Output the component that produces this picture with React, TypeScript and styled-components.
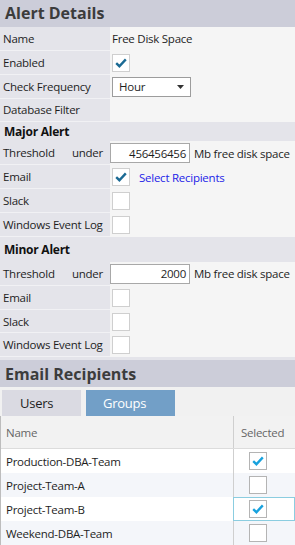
import React, { FunctionComponent } from 'react';
import styled, { createGlobalStyle } from 'styled-components';

const GlobalStyle = createGlobalStyle`
    html, body {
        margin: 0;
        padding: 0;
        background: #e4e4ea;
        font-family: "Open Sans", "Noto Sans", sans-serif;
        font-size: 11.5px;
        letter-spacing: -0.25px;
        color: #1e1e1e;
    }
`;

const Page = styled.div`
    width: 295px;
    height: 545px;
    overflow: hidden;
    display: flex;
    flex-direction: column;
    background: #e4e4ea;
`;

const PanelHeader = styled.div<{ $gap?: number }>`
    height: 27px;
    margin-top: ${({ $gap }) => $gap || 0}px;
    display: flex;
    align-items: center;
    padding-left: 5px;
    background: #cccdd9;
    color: #3c3c3c;
    font-size: 16px;
    font-weight: 700;
    letter-spacing: 0;
`;

const SectionTitle = styled.div<{ $height: number }>`
    height: ${({ $height }) => $height}px;
    display: flex;
    align-items: center;
    padding-left: 4px;
    font-weight: 700;
    font-size: 12px;
    color: #111;
`;

const Row = styled.div`
    display: grid;
    grid-template-columns: 110px 1fr;
    height: 24px;
`;

const Label = styled.div`
    display: flex;
    align-items: center;
    justify-content: space-between;
    padding: 0 7px 0 3px;
    border-bottom: 1px solid #f1f1f4;
    white-space: nowrap;
`;

const Value = styled.div`
    display: flex;
    align-items: center;
    gap: 4px;
    padding-left: 2px;
    background: #f5f5f5;
    white-space: nowrap;
`;

const Box = styled.span<{ $table?: boolean }>`
    width: 16px;
    height: 16px;
    display: inline-flex;
    align-items: center;
    justify-content: center;
    background: #fff;
    border: 1px solid ${({ $table }) => ($table ? '#b4b4b4' : '#cfcfcf')};
`;

const Select = styled.div`
    width: 79px;
    height: 20px;
    display: flex;
    align-items: center;
    justify-content: space-between;
    padding: 0 6px;
    box-sizing: border-box;
    background: #fff;
    border: 1px solid #9c9c9c;
`;

const NumberInput = styled.div`
    width: 80px;
    height: 20px;
    box-sizing: border-box;
    display: flex;
    align-items: center;
    justify-content: flex-end;
    padding-right: 3px;
    margin-left: -2px;
    background: #fff;
    border: 1px solid #a8a8a8;
`;

const Link = styled.span`
    color: #2323e8;
    margin-left: 5px;
`;

const TabStrip = styled.div`
    height: 29px;
    display: flex;
    align-items: flex-end;
    gap: 5px;
    padding-left: 2px;
    background: #f1f1f1;
`;

const Tab = styled.div<{ $active?: boolean }>`
    width: ${({ $active }) => ($active ? 89 : 79)}px;
    height: 26px;
    display: flex;
    align-items: center;
    box-sizing: border-box;
    padding-left: ${({ $active }) => ($active ? 17 : 18)}px;
    font-size: 13px;
    background: ${({ $active }) => ($active ? '#729fc7' : '#dadae2')};
    color: ${({ $active }) => ($active ? '#fff' : '#1e1e1e')};
`;

const Table = styled.div`
    flex: 1;
    background: #fff;
    border-left: 1px solid #bdbdbd;
`;

const TableRow = styled.div<{ $alt?: boolean; $head?: boolean }>`
    display: grid;
    grid-template-columns: 232px 1fr;
    height: ${({ $head }) => ($head ? 33 : 24)}px;
    background: ${({ $head, $alt }) => ($head ? '#f2f2f2' : $alt ? '#f4f6fa' : '#fff')};
    color: ${({ $head }) => ($head ? '#666' : '#1e1e1e')};
    border-bottom: ${({ $head }) => ($head ? '1px solid #dcdcdc' : 'none')};
    box-sizing: border-box;
`;

const Cell = styled.div<{ $narrow?: boolean; $focus?: boolean }>`
    display: flex;
    align-items: center;
    padding-left: ${({ $narrow }) => ($narrow ? 15 : 5)}px;
    box-sizing: border-box;
    border-left: ${({ $narrow }) => ($narrow ? '1px solid #cfcfcf' : 'none')};
    outline: ${({ $focus }) => ($focus ? '1px solid #8bcde0' : 'none')};
    outline-offset: -1px;
`;

const HeadCell = styled(Cell)`
    padding-left: ${({ $narrow }) => ($narrow ? 7 : 5)}px;
`;

const Check: FunctionComponent<{ color: string }> = ({ color }) => (
    <svg width="12" height="10" viewBox="0 0 12 10">
        <path d="M1.2 5.2 L4.4 8.2 L10.8 1.4" fill="none" stroke={color} strokeWidth="2.4" />
    </svg>
);

const CheckBox: FunctionComponent<{ checked?: boolean; table?: boolean }> = ({ checked, table }) => (
    <Box $table={table}>{checked && <Check color={table ? '#18a2de' : '#1b6a94'} />}</Box>
);

const FormRow: FunctionComponent<{ label: string; extra?: string; children?: React.ReactNode }> = ({ label, extra, children }) => (
    <Row>
        <Label>
            <span>{label}</span>
            {extra && <span>{extra}</span>}
        </Label>
        <Value>{children}</Value>
    </Row>
);

const groups = [
    { name: 'Production-DBA-Team', selected: true },
    { name: 'Project-Team-A', selected: false },
    { name: 'Project-Team-B', selected: true, focus: true },
    { name: 'Weekend-DBA-Team', selected: false },
];

const App: FunctionComponent = () => {
    return (
        <Page>
            <GlobalStyle />
            <PanelHeader>Alert Details</PanelHeader>
            <FormRow label="Name">Free Disk Space</FormRow>
            <FormRow label="Enabled"><CheckBox checked /></FormRow>
            <FormRow label="Check Frequency">
                <Select>
                    <span>Hour</span>
                    <svg width="7" height="4" viewBox="0 0 7 4"><path d="M0 0 H7 L3.5 4 Z" fill="#333" /></svg>
                </Select>
            </FormRow>
            <FormRow label="Database Filter" />

            <SectionTitle $height={19}>Major Alert</SectionTitle>
            <FormRow label="Threshold" extra="under">
                <NumberInput>456456456</NumberInput>
                <span>Mb free disk space</span>
            </FormRow>
            <FormRow label="Email"><CheckBox checked /><Link>Select Recipients</Link></FormRow>
            <FormRow label="Slack"><CheckBox /></FormRow>
            <FormRow label="Windows Event Log"><CheckBox /></FormRow>

            <SectionTitle $height={25}>Minor Alert</SectionTitle>
            <FormRow label="Threshold" extra="under">
                <NumberInput>2000</NumberInput>
                <span>Mb free disk space</span>
            </FormRow>
            <FormRow label="Email"><CheckBox /></FormRow>
            <FormRow label="Slack"><CheckBox /></FormRow>
            <FormRow label="Windows Event Log"><CheckBox /></FormRow>

            <PanelHeader $gap={3}>Email Recipients</PanelHeader>
            <TabStrip>
                <Tab>Users</Tab>
                <Tab $active>Groups</Tab>
            </TabStrip>
            <Table>
                <TableRow $head>
                    <HeadCell>Name</HeadCell>
                    <HeadCell $narrow>Selected</HeadCell>
                </TableRow>
                {groups.map((g, i) => (
                    <TableRow key={g.name} $alt={i % 2 === 1}>
                        <Cell>{g.name}</Cell>
                        <Cell $narrow $focus={g.focus}><CheckBox table checked={g.selected} /></Cell>
                    </TableRow>
                ))}
            </Table>
        </Page>
    );
};

export default App;
